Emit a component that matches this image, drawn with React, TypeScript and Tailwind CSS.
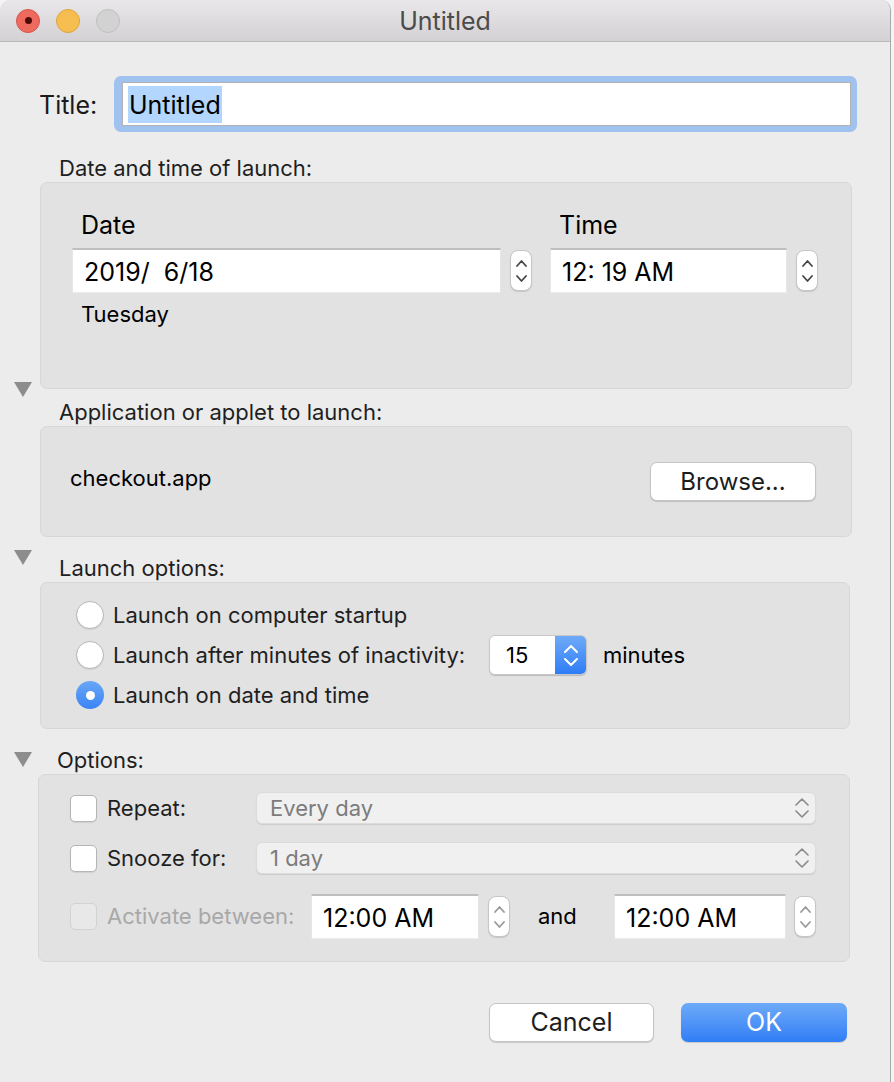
import React from "react"

const Chevrons = ({ color = "#4a4a4a", w = 10, h = 6, gap = "gap-[6px]", sw = 1.8 }: { color?: string; w?: number; h?: number; gap?: string; sw?: number }) => (
  <div className={`flex flex-col items-center ${gap}`}>
    <svg width={w} height={h} viewBox={`0 0 ${w} ${h}`}>
      <path d={`M1 ${h - 1} L${w / 2} 1 L${w - 1} ${h - 1}`} fill="none" stroke={color} strokeWidth={sw} strokeLinecap="round" strokeLinejoin="round" />
    </svg>
    <svg width={w} height={h} viewBox={`0 0 ${w} ${h}`}>
      <path d={`M1 1 L${w / 2} ${h - 1} L${w - 1} 1`} fill="none" stroke={color} strokeWidth={sw} strokeLinecap="round" strokeLinejoin="round" />
    </svg>
  </div>
)

const Stepper = ({ muted = false }: { muted?: boolean }) => (
  <div className="w-[22px] h-[41px] rounded-[8px] bg-white border border-[#c6c6c6] shadow-[0_1px_1px_rgba(0,0,0,0.12)] flex items-center justify-center">
    <Chevrons color={muted ? "#9a9a9a" : "#464646"} w={11} h={7} gap="gap-[8px]" />
  </div>
)

const Triangle = ({ className = "" }: { className?: string }) => (
  <svg width="18" height="15" viewBox="0 0 18 15" className={className}>
    <path d="M0 0 H18 L9 15 Z" fill="#8d8d8d" />
  </svg>
)

const Field = ({ value, width }: { value: string; width: string }) => (
  <div className={`${width} h-[45px] bg-white border-t-2 border-t-[#bfbfbf] border-x border-b border-x-[#e6e6e6] border-b-[#ececec] flex items-center pl-[11px] pt-[3px] text-[25px] text-black whitespace-pre`}>
    {value}
  </div>
)

const Radio = ({ checked = false }: { checked?: boolean }) =>
  checked ? (
    <div className="w-[28px] h-[28px] rounded-full bg-gradient-to-b from-[#69a6f6] to-[#3a84f5] flex items-center justify-center">
      <div className="w-[9px] h-[9px] rounded-full bg-white" />
    </div>
  ) : (
    <div className="w-[28px] h-[28px] rounded-full bg-white border border-[#b7b7b7] shadow-[0_1px_1px_rgba(0,0,0,0.08)]" />
  )

const Checkbox = ({ disabled = false }: { disabled?: boolean }) => (
  <div
    className={`w-[27px] h-[27px] rounded-[5px] border ${
      disabled ? "bg-[#e8e8e8] border-[#d2d2d2]" : "bg-white border-[#b5b5b5] shadow-[0_1px_1px_rgba(0,0,0,0.08)]"
    }`}
  />
)

const Select = ({ value }: { value: string }) => (
  <div className="w-[560px] h-[32px] rounded-[6px] bg-[#f0f0f0] border border-[#dcdcdc] shadow-[0_1px_1px_rgba(0,0,0,0.1)] flex items-center justify-between pl-[13px] pr-[6px] text-[22px] text-[#7c7c7c]">
    <span>{value}</span>
    <Chevrons color="#8a8a8a" w={14} h={8} gap="gap-[4px]" sw={1.6} />
  </div>
)

export default function App() {
  return (
    <div className="w-[894px] h-[1082px] overflow-hidden bg-[#f4f4f4] flex font-['Inter','Liberation_Sans',sans-serif] text-[#1f1f1f]">
      <div className="w-[891px] h-[1100px] bg-[#ececec] border-r border-[#a9a9a9] rounded-t-[10px] rounded-bl-[10px] flex flex-col overflow-hidden">
        {/* title bar */}
        <div className="h-[42px] shrink-0 bg-gradient-to-b from-[#e9e7e9] to-[#d3d1d3] border-b border-[#b9b9b9] flex items-center relative">
          <div className="flex items-center gap-[16px] pl-[16px]">
            <div className="w-[24px] h-[24px] rounded-full bg-[#ee6a5f] border border-[#d6554b] flex items-center justify-center">
              <div className="w-[7px] h-[7px] rounded-full bg-[#4d0c07]" />
            </div>
            <div className="w-[24px] h-[24px] rounded-full bg-[#f6be50] border border-[#dca53b]" />
            <div className="w-[24px] h-[24px] rounded-full bg-[#d2d2d2] border border-[#bfbfbf]" />
          </div>
          <div className="absolute left-0 right-0 text-center text-[25px] text-[#4b4b4b] leading-[42px] pointer-events-none">Untitled</div>
        </div>

        {/* title row */}
        <div className="flex items-center mt-[34px] pl-[39px]">
          <span className="text-[25px] w-[75px] text-[#1a1a1a] pt-[3px]">Title:</span>
          <div className="w-[743px] h-[56px] rounded-[7px] bg-[#9fc2ee] p-[6px] pl-[8px]">
            <div className="w-full h-full bg-white border border-[#b2b2b2] flex items-center pl-[5px]">
              <span className="bg-[#b3d6fe] text-[25px] text-black leading-[35px] pt-[2px] px-[1px]">Untitled</span>
            </div>
          </div>
        </div>

        {/* date and time */}
        <div className="mt-[24px] pl-[59px] text-[22px] leading-[24px] h-[24px]">Date and time of launch:</div>
        <div className="mt-[2px] ml-[40px] w-[812px] h-[207px] rounded-[7px] bg-[#e2e2e2] border border-[#d7d7d7] pl-[31px] pt-[28px] flex gap-[18px]">
          <div className="flex flex-col">
            <div className="pl-[9px] text-[25px] leading-[28px] h-[28px] text-black">Date</div>
            <div className="mt-[9px] flex items-center gap-[9px]">
              <Field value="2019/  6/18" width="w-[429px]" />
              <Stepper />
            </div>
            <div className="mt-[9px] pl-[9px] text-[22px] leading-[24px] text-black">Tuesday</div>
          </div>
          <div className="flex flex-col">
            <div className="pl-[9px] text-[25px] leading-[28px] h-[28px] text-black">Time</div>
            <div className="mt-[9px] flex items-center gap-[9px]">
              <Field value="12: 19 AM" width="w-[237px]" />
              <Stepper />
            </div>
          </div>
        </div>

        {/* application */}
        <div className="flex items-start h-[37px]">
          <Triangle className="ml-[14px] -mt-[7px]" />
          <div className="mt-[11px] pl-[27px] text-[22px] leading-[24px]">Application or applet to launch:</div>
        </div>
        <div className="ml-[40px] w-[812px] h-[111px] rounded-[7px] bg-[#e2e2e2] border border-[#d7d7d7] pl-[29px] pr-[35px] flex items-center justify-between">
          <span className="text-[22px] text-black -mt-[6px]">checkout.app</span>
          <div className="w-[166px] h-[39px] rounded-[7px] bg-white border border-[#c4c4c4] shadow-[0_1px_1px_rgba(0,0,0,0.15)] flex items-center justify-center text-[24px] text-[#1d1d1d]">
            Browse...
          </div>
        </div>

        {/* launch options */}
        <div className="flex items-start h-[45px]">
          <Triangle className="ml-[14px] mt-[13px]" />
          <div className="mt-[19px] pl-[27px] text-[22px] leading-[24px]">Launch options:</div>
        </div>
        <div className="ml-[40px] w-[810px] h-[147px] rounded-[7px] bg-[#e2e2e2] border border-[#d7d7d7] pl-[35px] pt-[12px] flex flex-col text-[22px]">
          <div className="h-[40px] flex items-center gap-[9px]">
            <Radio />
            <span>Launch on computer startup</span>
          </div>
          <div className="h-[40px] flex items-center">
            <Radio />
            <span className="ml-[9px] w-[376px]">Launch after minutes of inactivity:</span>
            <div className="w-[98px] h-[40px] rounded-[6px] flex overflow-hidden shadow-[0_1px_1px_rgba(0,0,0,0.18)] border border-[#c8c8c8]">
              <div className="w-[65px] bg-white flex items-center pl-[16px] text-[22px] text-black">15</div>
              <div className="flex-1 bg-gradient-to-b from-[#6eaaf7] to-[#2e7cf6] flex items-center justify-center">
                <Chevrons color="#ffffff" w={14} h={8} gap="gap-[5px]" sw={2} />
              </div>
            </div>
            <span className="ml-[16px] text-black">minutes</span>
          </div>
          <div className="h-[40px] flex items-center gap-[9px]">
            <Radio checked />
            <span>Launch on date and time</span>
          </div>
        </div>

        {/* options */}
        <div className="flex items-start h-[45px]">
          <Triangle className="ml-[14px] mt-[23px]" />
          <div className="mt-[19px] pl-[25px] text-[22px] leading-[24px]">Options:</div>
        </div>
        <div className="ml-[38px] w-[812px] h-[188px] rounded-[7px] bg-[#e2e2e2] border border-[#d7d7d7] pl-[31px] pt-[17px] flex flex-col text-[22px]">
          <div className="h-[32px] flex items-center">
            <div className="w-[186px] flex items-center gap-[10px]">
              <Checkbox />
              <span>Repeat:</span>
            </div>
            <Select value="Every day" />
          </div>
          <div className="mt-[18px] h-[32px] flex items-center">
            <div className="w-[186px] flex items-center gap-[10px]">
              <Checkbox />
              <span>Snooze for:</span>
            </div>
            <Select value="1 day" />
          </div>
          <div className="mt-[20px] h-[45px] flex items-center">
            <div className="w-[241px] flex items-center gap-[10px]">
              <Checkbox disabled />
              <span className="text-[#a8a8a8]">Activate between:</span>
            </div>
            <Field value="12:00 AM" width="w-[168px]" />
            <div className="ml-[9px]">
              <Stepper muted />
            </div>
            <span className="ml-[28px] w-[76px] text-black">and</span>
            <Field value="12:00 AM" width="w-[172px]" />
            <div className="ml-[8px]">
              <Stepper muted />
            </div>
          </div>
        </div>

        {/* buttons */}
        <div className="mt-[41px] flex justify-end gap-[27px] pr-[43px]">
          <div className="w-[165px] h-[39px] rounded-[7px] bg-white border border-[#c4c4c4] shadow-[0_1px_1px_rgba(0,0,0,0.15)] flex items-center justify-center text-[25px] text-[#1d1d1d]">
            Cancel
          </div>
          <div className="w-[166px] h-[39px] rounded-[7px] bg-gradient-to-b from-[#6eaaf7] to-[#2f7df6] shadow-[0_1px_1px_rgba(0,0,0,0.15)] flex items-center justify-center text-[25px] text-white">
            OK
          </div>
        </div>
      </div>
    </div>
  )
}
